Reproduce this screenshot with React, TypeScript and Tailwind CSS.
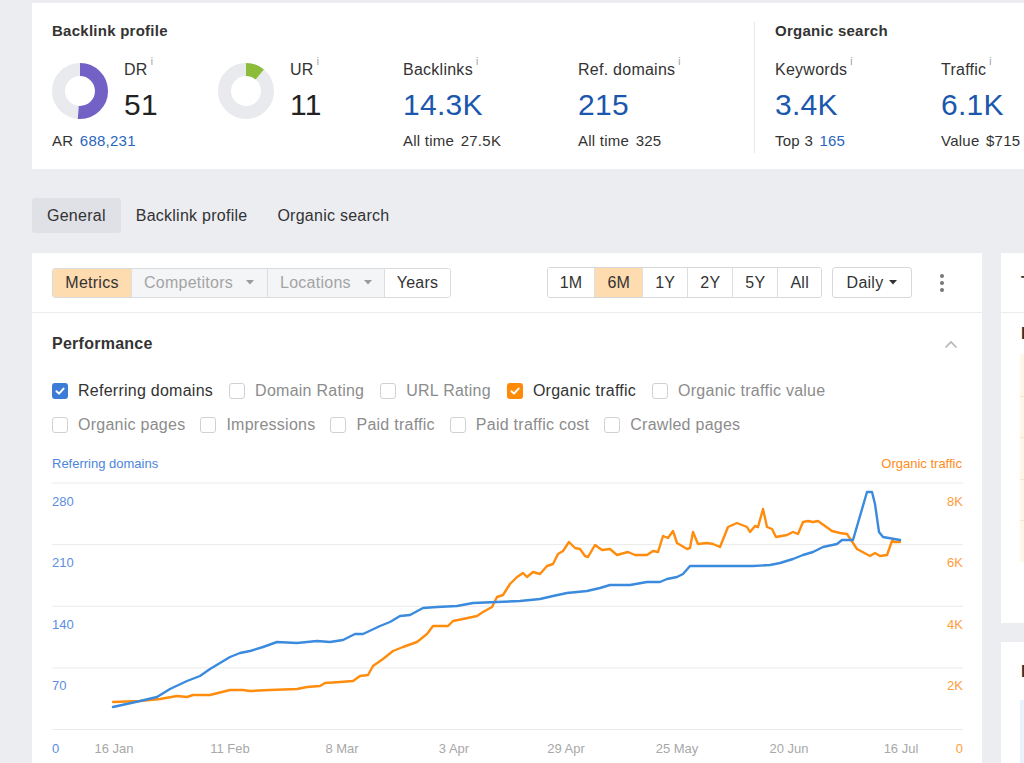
import * as React from "react"

const BLUE_PTS =
	"113,708 140,702 157,698 170,690 187,682 200,677 210,670 230,658 240,654 250,652 263,648 277,643 297,644 317,642 330,643 343,641 355,635 363,635 380,627 390,623 400,617 410,616 423,609 437,608 457,607 473,604 497,603 520,602 540,600 553,597 567,594 587,592 600,589 610,586 630,586 647,583 660,583 667,580 677,578 683,575 690,567 700,567 720,567 737,567 753,567 770,566 780,564 793,560 803,556 813,553 823,548 837,545 842,541 853,541 867,493 872,493 875,505 879,533 883,538 900,541"

const ORANGE_PTS =
	"113,703 140,702 160,700 177,697 187,698 193,696 210,696 230,691 243,691 250,692 270,691 297,690 307,688 320,687 325,684 340,683 353,682 360,677 368,676 373,667 383,660 393,652 403,648 417,643 427,635 433,627 448,627 453,622 463,620 477,617 483,613 492,608 497,598 503,596 510,585 517,578 523,574 527,578 533,573 540,575 547,567 553,565 558,555 563,552 569,543 575,549 580,550 585,557 588,558 595,546 602,551 610,550 617,556 628,553 635,556 647,556 653,552 658,553 663,537 668,539 673,532 677,544 687,550 690,549 693,533 698,545 707,544 713,545 720,548 728,528 737,524 747,528 750,533 755,527 758,528 763,510 767,528 772,530 776,538 787,536 793,533 798,535 803,523 808,522 813,523 818,522 832,532 840,534 847,535 857,550 870,557 875,554 880,557 887,556 892,542 895,543 900,543"

function Info() {
	return <span className="relative top-[-3px] ml-[3px] align-top text-[10px] leading-none text-[#9a9a9a]">i</span>
}

function Donut({ pct, color }: { pct: number; color: string }) {
	const r = 21.5
	const c = 2 * Math.PI * r
	return (
		<svg width="56" height="56" viewBox="0 0 56 56" className="shrink-0">
			<circle cx="28" cy="28" r={r} fill="none" stroke="#e9eaed" strokeWidth="13" />
			<circle
				cx="28"
				cy="28"
				r={r}
				fill="none"
				stroke={color}
				strokeWidth="13"
				strokeDasharray={`${(c * pct) / 100} ${c}`}
				transform="rotate(-90 28 28)"
			/>
		</svg>
	)
}

function Stat({ label, value, subLabel, subValue, subBlue, width }: {
	label: string
	value: string
	subLabel: string
	subValue: string
	subBlue?: boolean
	width: string
}) {
	return (
		<div className={`flex flex-col ${width}`}>
			<div className="text-[16px] leading-5 text-[#333]">
				{label}
				<Info />
			</div>
			<div className="mt-2 text-[30px] leading-[34px] text-[#1b57ad]">{value}</div>
			<div className="mt-[10px] text-[15px] leading-[18px] text-[#333]">
				{subLabel} <span className={subBlue ? "ml-[2px] text-[#2a66bb]" : "ml-[2px]"}>{subValue}</span>
			</div>
		</div>
	)
}

function RatingStat({ label, value, pct, color, width, footer }: {
	label: string
	value: string
	pct: number
	color: string
	width: string
	footer?: React.ReactNode
}) {
	return (
		<div className={`flex flex-col ${width}`}>
			<div className="flex items-center gap-4">
				<Donut pct={pct} color={color} />
				<div className="flex flex-col">
					<div className="text-[16px] leading-5 text-[#333]">
						{label}
						<Info />
					</div>
					<div className="mt-2 text-[30px] leading-[34px] text-[#222]">{value}</div>
				</div>
			</div>
			{footer}
		</div>
	)
}

function Caret({ color = "#9a9a9a" }: { color?: string }) {
	return (
		<svg width="8" height="5" viewBox="0 0 8 5" className="shrink-0">
			<path d="M0 0 L8 0 L4 4.5 Z" fill={color} />
		</svg>
	)
}

function Checkbox({ label, checked, color }: { label: string; checked?: boolean; color?: string }) {
	return (
		<div className="flex items-center gap-[10px]">
			{checked ? (
				<span className="flex h-4 w-4 items-center justify-center rounded-[3px]" style={{ background: color }}>
					<svg width="12" height="12" viewBox="0 0 12 12">
						<polyline points="2.5,6.2 5,8.6 9.6,3.6" fill="none" stroke="white" strokeWidth="2" strokeLinecap="round" strokeLinejoin="round" />
					</svg>
				</span>
			) : (
				<span className="h-4 w-4 rounded-[3px] border border-[#cfd1d5] bg-white" />
			)}
			<span className={`text-[16px] leading-5 ${checked ? "text-[#333]" : "text-[#8c8c8c]"}`}>{label}</span>
		</div>
	)
}

function Chart() {
	const grid = [484, 545.6, 607.3, 668.9, 730.5]
	const left = ["280", "210", "140", "70", "0"]
	const right = ["8K", "6K", "4K", "2K", "0"]
	const dates: [string, number][] = [
		["16 Jan", 114],
		["11 Feb", 230],
		["8 Mar", 342],
		["3 Apr", 454],
		["29 Apr", 566],
		["25 May", 677],
		["20 Jun", 789],
		["16 Jul", 901],
	]
	return (
		<svg
			width="911"
			height="288"
			viewBox="52 475 911 288"
			className="mt-[2px] block"
			style={{ fontFamily: "'Liberation Sans', Arial, sans-serif", letterSpacing: 0 }}
		>
			{grid.map((y) => (
				<line key={y} x1="52" x2="963" y1={y} y2={y} stroke="#ebebeb" strokeWidth="1" />
			))}
			{grid.slice(0, 4).map((y, i) => (
				<g key={i}>
					<text x="52" y={y + 22.5} fontSize="13" fill="#5b8ee0">{left[i]}</text>
					<text x="963" y={y + 22.5} fontSize="13" fill="#ff9d3b" textAnchor="end">{right[i]}</text>
				</g>
			))}
			<text x="52" y="753.5" fontSize="13" fill="#5b8ee0">0</text>
			<text x="963" y="753.5" fontSize="13" fill="#ff9d3b" textAnchor="end">0</text>
			{dates.map(([d, x]) => (
				<text key={d} x={x} y="753.5" fontSize="13" fill="#a8a8a8" textAnchor="middle">{d}</text>
			))}
			<polyline points={ORANGE_PTS} fill="none" stroke="#ff8c0d" strokeWidth="2.4" strokeLinejoin="round" strokeLinecap="round" />
			<polyline points={BLUE_PTS} fill="none" stroke="#3a8ade" strokeWidth="2.4" strokeLinejoin="round" strokeLinecap="round" />
		</svg>
	)
}

export default function App() {
	const ranges = ["1M", "6M", "1Y", "2Y", "5Y", "All"]

	return (
		<div className="h-[763px] w-[1024px] overflow-hidden bg-[#ebedf0] pl-8 pt-[3px] font-['Liberation_Sans',Arial,sans-serif] tracking-[0.016em]">
			{/* Overview card */}
			<div className="flex h-[166px] w-[1030px] bg-white">
				<div className="w-[722px] pl-5 pt-5">
					<div className="text-[15px] font-bold leading-4 text-[#333]">Backlink profile</div>
					<div className="mt-[21px] flex items-start">
						<RatingStat
							label="DR"
							value="51"
							pct={51}
							color="#7461c6"
							width="w-[166px]"
							footer={
								<div className="mt-[10px] text-[15px] leading-[18px] text-[#333]">
									AR <span className="ml-[2px] text-[#2a66bb]">688,231</span>
								</div>
							}
						/>
						<RatingStat label="UR" value="11" pct={11} color="#8cbd3a" width="w-[185px]" />
						<Stat label="Backlinks" value="14.3K" subLabel="All time" subValue="27.5K" width="w-[175px]" />
						<Stat label="Ref. domains" value="215" subLabel="All time" subValue="325" width="w-[156px]" />
					</div>
				</div>
				<div className="mt-[19px] h-[131px] w-px bg-[#e6e7ea]" />
				<div className="pl-5 pt-5">
					<div className="text-[15px] font-bold leading-4 text-[#333]">Organic search</div>
					<div className="mt-[21px] flex items-start">
						<Stat label="Keywords" value="3.4K" subLabel="Top 3" subValue="165" subBlue width="w-[166px]" />
						<Stat label="Traffic" value="6.1K" subLabel="Value" subValue="$715" width="w-[100px]" />
					</div>
				</div>
			</div>

			{/* Tabs */}
			<div className="mt-[29px] flex h-[35px]">
				<div className="rounded-[3px] bg-[#dfe1e6] px-[15px] text-[16px] leading-[35px] text-[#333]">General</div>
				<div className="px-[15px] text-[16px] leading-[35px] text-[#333]">Backlink profile</div>
				<div className="px-[15px] text-[16px] leading-[35px] text-[#333]">Organic search</div>
			</div>

			<div className="mt-5 flex gap-[19px]">
				{/* Main card */}
				<div className="w-[950px] shrink-0 bg-white">
					<div className="flex h-[60px] items-center justify-between border-b border-[#ebecef] px-5">
						<div className="flex h-[30px] overflow-hidden rounded-[3px] border border-[#d9dbdf] text-[16px]">
							<div className="flex w-[78px] items-center justify-center bg-[#ffdbb0] text-[#333]">Metrics</div>
							<div className="flex w-[136px] items-center gap-[13px] border-l border-[#dcdee2] bg-[#f4f5f7] pl-3 text-[#a4a4a4]">
								Competitors
								<Caret />
							</div>
							<div className="flex w-[117px] items-center gap-[13px] border-l border-[#dcdee2] bg-[#f4f5f7] pl-3 text-[#a4a4a4]">
								Locations
								<Caret />
							</div>
							<div className="flex w-[66px] items-center justify-center border-l border-[#dcdee2] bg-white text-[#333]">Years</div>
						</div>
						<div className="flex items-center">
							<div className="flex h-[31px] overflow-hidden rounded-[3px] border border-[#d6d8dc] text-[16px] text-[#333]">
								{ranges.map((r, i) => (
									<div
										key={r}
										className={`flex items-center px-3 ${i > 0 ? "border-l border-[#dcdee2]" : ""} ${r === "6M" ? "bg-[#ffdbb0]" : "bg-white"}`}
									>
										{r}
									</div>
								))}
							</div>
							<div className="ml-[10px] flex h-[31px] w-[80px] items-center justify-center gap-[6px] rounded-[3px] border border-[#d6d8dc] text-[16px] text-[#333]">
								Daily
								<Caret color="#333" />
							</div>
							<div className="ml-[10px] flex w-[40px] flex-col items-center gap-[3px]">
								<span className="h-[4px] w-[4px] rounded-full bg-[#777]" />
								<span className="h-[4px] w-[4px] rounded-full bg-[#777]" />
								<span className="h-[4px] w-[4px] rounded-full bg-[#777]" />
							</div>
						</div>
					</div>

					<div className="px-5 pt-[21px]">
						<div className="flex items-center justify-between">
							<div className="text-[16px] font-bold leading-5 text-[#333]">Performance</div>
							<svg width="14" height="9" viewBox="0 0 14 9" className="mr-[4px]">
								<polyline points="1.5,7.5 7,2 12.5,7.5" fill="none" stroke="#b5b5b5" strokeWidth="1.6" />
							</svg>
						</div>
						<div className="mt-[27px] flex gap-[16px]">
							<Checkbox label="Referring domains" checked color="#3a7cd6" />
							<Checkbox label="Domain Rating" />
							<Checkbox label="URL Rating" />
							<Checkbox label="Organic traffic" checked color="#ff8a05" />
							<Checkbox label="Organic traffic value" />
						</div>
						<div className="mt-[14px] flex gap-[15px]">
							<Checkbox label="Organic pages" />
							<Checkbox label="Impressions" />
							<Checkbox label="Paid traffic" />
							<Checkbox label="Paid traffic cost" />
							<Checkbox label="Crawled pages" />
						</div>
						<div className="mt-[21px] flex justify-between text-[13px] leading-4 tracking-normal">
							<span className="text-[#4d86da]">Referring domains</span>
							<span className="text-[#ff8c1a]">Organic traffic</span>
						</div>
						<Chart />
					</div>
				</div>

				{/* Side panels */}
				<div className="flex w-[200px] shrink-0 flex-col gap-[19px]">
					<div className="h-[370px] bg-white">
						<div className="flex h-[60px] items-center border-b border-[#ebecef] pl-5 text-[16px] font-bold text-[#333]">Top</div>
						<div className="pl-5 pt-[11px] text-[16px] font-bold leading-5 text-[#333]">Locations</div>
						<div className="ml-[19px] mt-[10px] h-[208px] bg-[#fff6ea]">
							<div className="h-[43px] border-b border-[#f7e6cf]" />
							<div className="h-[41px] border-b border-[#f7e6cf]" />
							<div className="h-[42px] border-b border-[#f7e6cf]" />
							<div className="h-[41px] border-b border-[#f7e6cf]" />
						</div>
					</div>
					<div className="h-[200px] bg-white">
						<div className="pl-5 pt-[20px] text-[16px] font-bold leading-5 text-[#333]">Pages</div>
						<div className="ml-[19px] mt-[18px] h-[80px] bg-[#eaf2fd]" />
					</div>
				</div>
			</div>
		</div>
	)
}
